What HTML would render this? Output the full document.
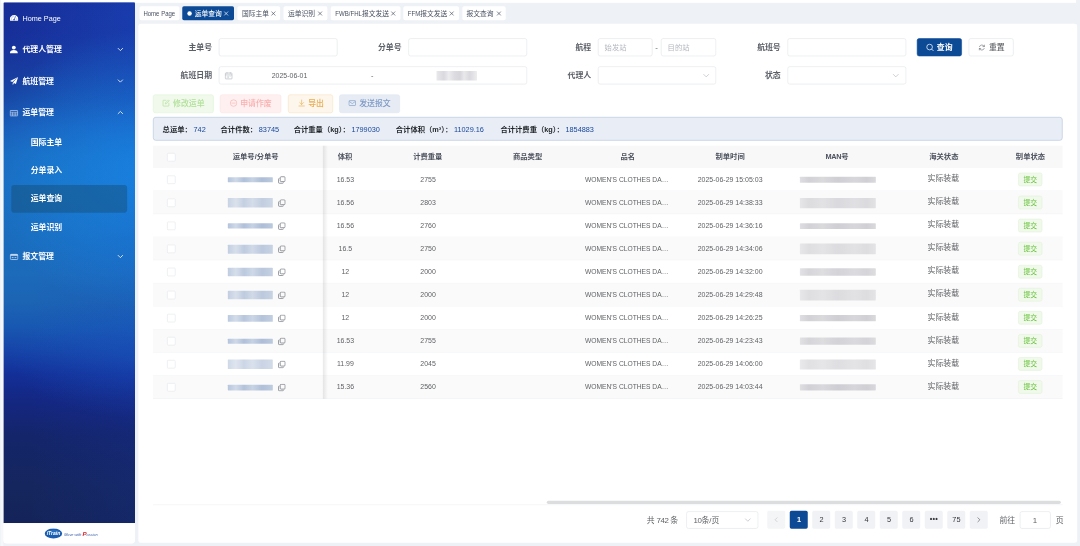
<!DOCTYPE html>
<html lang="zh-CN">
<head>
<meta charset="utf-8">
<title>运单查询</title>
<style>
*{box-sizing:border-box;margin:0;padding:0}
html,body{width:1080px;height:546px;overflow:hidden;background:#eef1f5}
body{font-family:"Liberation Sans","Noto Sans CJK SC",sans-serif;color:#606266}
#app{position:absolute;left:0;top:0;width:1920px;height:971px;transform:scale(.5625);transform-origin:0 0;background:#eef1f5;overflow:hidden}
.topstrip{position:absolute;left:2px;top:0;width:1911px;height:5px;background:#fff}
.leftstrip{position:absolute;left:1px;top:0;width:5px;height:971px;background:#f6f7fb}
/* sidebar */
.side{position:absolute;left:6px;top:4px;width:234px;height:961.5px;background:#fff;border-radius:2px 2px 6px 6px;overflow:hidden}
.side .bg{position:absolute;left:0;top:0;width:234px;height:925.5px;
background:
linear-gradient(90deg,rgba(24,60,200,0) 20%,rgba(24,60,200,.12) 100%),
radial-gradient(ellipse 110% 22% at 105% 2%,rgba(30,100,215,.3),rgba(30,100,215,0) 100%),
radial-gradient(ellipse 100% 12% at 105% 68%,rgba(30,110,200,.3),rgba(30,110,200,0) 100%),
radial-gradient(ellipse 125% 27% at 108% 32%,rgba(24,150,240,.72),rgba(24,150,240,.36) 50%,rgba(24,150,240,0) 100%),
linear-gradient(180deg,#172b96 0%,#172e98 6%,#18399e 12.2%,#1847a6 18.3%,#1a5ab6 24.1%,#1a68bd 29.5%,#1a6cc0 34.5%,#1a6bbc 46%,#1c6aba 52.2%,#1c64b4 57.6%,#1858b2 62.2%,#1644a8 66.8%,#132f98 71.4%,#142782 76.4%,#14256a 83.3%,#15265e 92.9%,#14245a 100%)}
.mi{position:absolute;left:0;width:234px;height:56px;color:#fff;font-weight:700;font-size:14px;line-height:56px}
.mi svg.ic{position:absolute;left:11px;top:20.5px;width:16px;height:16px}
.mi .tx{position:absolute;left:34px;top:0;white-space:nowrap}
.mi svg.ar{position:absolute;left:202px;top:22px;width:12px;height:12px}
.smi{position:absolute;left:0;width:234px;height:50px;line-height:50px;color:#fff;font-weight:700;font-size:14px}
.smi .tx{position:absolute;left:48.5px;top:0;white-space:nowrap}
.smi.act::before{content:"";position:absolute;left:14px;top:.5px;width:206px;height:49px;border-radius:5px;background:rgba(20,70,102,.4)}
.foot{position:absolute;left:0;top:925.5px;width:234px;height:36px;background:#fff}
/* tabs */
.tabs{position:absolute;left:246px;top:4px;width:1667px;height:36px}
.tab{position:absolute;top:7px;height:25px;line-height:26px;background:#fff;border-radius:3px;font-size:12px;color:#495060;white-space:nowrap;text-align:left;padding-left:8px}
.tab.act{background:#0d4a96;color:#fff;font-weight:500}
.tab.act::before{content:"";position:absolute;left:9px;top:8.5px;width:8px;height:8px;border-radius:50%;background:#fff}
.tab svg{position:absolute;top:8px;width:10px;height:10px}
.sx{display:inline-block;transform-origin:0 50%;transform:scaleX(.9)}
/* main */
.main{position:absolute;left:246px;top:42px;width:1669px;height:923px;background:#fff;border-radius:4px}
.lb{position:absolute;height:32px;margin-left:1px;line-height:30px;font-size:14px;font-weight:700;color:#5c6068;text-align:right;width:120px;white-space:nowrap}
.in{position:absolute;height:32px;border:1px solid #dfe2e8;border-radius:4px;background:#fff;font-size:14px;line-height:30px;color:#606266}
.in .ph{position:absolute;left:10.5px;top:0;color:#b4b8c0;font-size:13px}
.in svg.dn{position:absolute;right:10.5px;top:9px;width:13px;height:13px}
.btn{position:absolute;height:33px;border-radius:4px;border:1px solid;font-weight:500;font-size:14px;line-height:31px;white-space:nowrap}
.btn svg{position:absolute;left:15.5px;top:7.5px;width:14.5px;height:14.5px}
.btn .t{position:absolute;left:35px;top:0}
.sum{position:absolute;left:26px;top:166px;width:1617px;height:42px;border:1px solid #aebfda;border-radius:5px;background:#e9eef6;font-size:13px;line-height:43px;color:#1f2329;font-weight:700;white-space:nowrap}
.sum span.k{position:absolute;top:0}
.sum b{font-weight:400;color:#17459b;margin-left:3px}
/* table */
.tbl{position:absolute;left:26px;top:217px;width:1617px;height:640px}
.th{position:absolute;left:0;top:0;width:1617px;height:40px;background:#f8f8f9;font-size:13px;font-weight:700;color:#4d525e;line-height:37px}
.tr{position:absolute;left:0;width:1617px;height:41px;font-size:14px;line-height:39px;color:#606266;border-bottom:1px solid #eef0f4;background:#fff}
.tr.odd{background:#fafafa}
.c{position:absolute;top:0;transform:translateX(-50%);white-space:nowrap}
.c2{left:182.5px}.c3{left:341.5px}.c4{left:488.5px}.c5{left:666px}.c6{left:840px}.c7{left:1026px}.c8{left:1215px}.c9{left:1404px}.c10{left:1560px}
.tr .c9{top:-1.5px;left:1405px}
.th .c9{left:1406px}
.n{transform:translateX(-50%) scaleX(.886)}
.c6.n{transform:translateX(-50%) scaleX(.85);left:842px}
.ck{position:absolute;left:24.5px;top:12.5px;width:15px;height:15px;border:1px solid #e2e4e9;border-radius:2px;background:#fff}
.th .ck{top:12.5px}
.blur{position:absolute;border-radius:1px}
.wb{left:133px;top:16.5px;width:80px;height:9px;background:linear-gradient(90deg,#b4c4dc,#cfd9e8 18%,#b0c0d9 36%,#c6d2e4 55%,#adbdd7 76%,#bccade);filter:blur(.6px)}
.cp{position:absolute;left:221.5px;top:13.5px;width:14px;height:14px}
.man{left:1150px;top:15px;width:135px;height:11px;background:linear-gradient(90deg,#dcdce0,#cdcdd2 12%,#d6d6da 30%,#c9c9cf 50%,#d3d3d8 72%,#cbcbd0 88%,#d6d6da);filter:blur(1.3px)}
.tag{position:absolute;left:1538px;top:7.5px;width:43px;height:24px;border:1px solid #e1f3d8;background:#f0f9eb;border-radius:4px;color:#67c23a;font-size:12px;line-height:22px;text-align:center}
.shadow{position:absolute;left:302px;top:0;width:9px;height:450px;background:linear-gradient(90deg,rgba(0,0,0,.09),rgba(0,0,0,0))}
.scroll{position:absolute;left:700px;top:631px;width:914px;height:6px;border-radius:3px;background:#dcdddf}
.tbot{position:absolute;left:0;top:638px;width:1617px;height:1px;background:#eceef2}
/* pagination */
.pg{position:absolute;top:866px;height:32px;line-height:32px;font-size:14px;color:#606266;white-space:nowrap}
.pb{position:absolute;top:866px;width:32px;height:32px;border-radius:3px;background:#f1f2f5;color:#33363c;font-size:13px;font-weight:500;text-align:center;line-height:32px}
.pb.act{background:#0d4a96;color:#fff;font-weight:700}
.pb svg{position:absolute;left:10px;top:10px;width:12px;height:12px}
</style>
</head>
<body>
<div id="app">
<div class="leftstrip"></div>
<div class="topstrip"></div>
<div class="side">
<div class="bg"></div>
<div class="mi" style="top:.5px">
<svg class="ic" style="margin-top:-1px" viewBox="0 0 16 16"><path d="M8 2.500A7.500 7.500 0 0 0 .5 10c0 1.100.2 2.100.6 3h13.800c.4-.9.600-1.900.600-3A7.500 7.500 0 0 0 8 2.500z" fill="#fff"/><path d="M8.300 10.600 10.400 5.600" stroke="#2a43a8" stroke-width="1.200" stroke-linecap="round"/><circle cx="8" cy="11" r="1.400" fill="#2a43a8"/><circle cx="3" cy="9.800" r=".8" fill="#2a43a8"/><circle cx="4.400" cy="6.200" r=".8" fill="#2a43a8"/><circle cx="7.600" cy="4.600" r=".7" fill="#2a43a8"/><circle cx="13" cy="9.800" r=".8" fill="#2a43a8"/></svg>
<span class="tx" style="font-weight:400"><span class="sx" style="transform:scaleX(.92)">Home Page</span></span></div>
<div class="mi" style="top:55.5px">
<svg class="ic" viewBox="0 0 16 16"><circle cx="7.600" cy="4.600" r="3.400" fill="#fff"/><path d="M.6 14.600c0-3.400 2.800-5.500 7-5.500s7 2.100 7 5.500z" fill="#fff"/></svg>
<span class="tx">代理人管理</span>
<svg class="ar" viewBox="0 0 12 12"><path d="M2 4l4 4 4-4" fill="none" stroke="#e3ebf8" stroke-width="1.600" stroke-linecap="round" stroke-linejoin="round"/></svg></div>
<div class="mi" style="top:111.5px">
<svg class="ic" viewBox="0 0 16 16"><path d="M15.200 1 .8 8.200l4 1.700zM15.200 1 5.800 10.500l5.500 2.800zM5.600 11.200v3.800l2.300-2.500z" fill="#fff"/></svg>
<span class="tx">航班管理</span>
<svg class="ar" viewBox="0 0 12 12"><path d="M2 4l4 4 4-4" fill="none" stroke="#e3ebf8" stroke-width="1.600" stroke-linecap="round" stroke-linejoin="round"/></svg></div>
<div class="mi" style="top:168px">
<svg class="ic" viewBox="0 0 16 16"><rect x="1" y="3.400" width="13.400" height="9.600" rx=".7" fill="none" stroke="#dfe8f8" stroke-width="1.100"/><path d="M1 6.600h13.400M1 9.800h13.400M5.400 6.600v6.400M10 6.600v6.400" stroke="#dfe8f8" stroke-width=".9"/></svg>
<span class="tx">运单管理</span>
<svg class="ar" viewBox="0 0 12 12"><path d="M2 8l4-4 4 4" fill="none" stroke="#e3ebf8" stroke-width="1.600" stroke-linecap="round" stroke-linejoin="round"/></svg></div>
<div class="smi" style="top:223.5px"><span class="tx">国际主单</span></div>
<div class="smi" style="top:273.5px"><span class="tx">分单录入</span></div>
<div class="smi act" style="top:324px"><span class="tx">运单查询</span></div>
<div class="smi" style="top:374px"><span class="tx">运单识别</span></div>
<div class="mi" style="top:423.5px">
<svg class="ic" viewBox="0 0 16 16"><rect x="1.300" y="4.200" width="13.400" height="9.200" rx="1.800" fill="none" stroke="#d4e3f8" stroke-width="1.300"/><path d="M1.300 6.600V5.800a1.800 1.800 0 0 1 1.800-1.800h9.800a1.800 1.800 0 0 1 1.800 1.800v.8z" fill="#d4e3f8"/><path d="M4.600 9.900h1.800M9.600 9.900h1.800" stroke="#d4e3f8" stroke-width="1.300" stroke-linecap="round"/></svg>
<span class="tx">报文管理</span>
<svg class="ar" viewBox="0 0 12 12"><path d="M2 4l4 4 4-4" fill="none" stroke="#e3ebf8" stroke-width="1.600" stroke-linecap="round" stroke-linejoin="round"/></svg></div>
<div class="foot">
<svg style="position:absolute;left:72.500px;top:9px;width:32px;height:19px" viewBox="0 0 34 20"><ellipse cx="17" cy="10" rx="16.500" ry="9.500" fill="#1a5cb0"/><ellipse cx="17" cy="8" rx="13" ry="5" fill="#2d78c8" opacity=".6"/><text x="17" y="13.500" text-anchor="middle" font-family="Liberation Sans,sans-serif" font-size="9.500" font-weight="700" font-style="italic" fill="#fff">iTrain</text></svg>
<span style="position:absolute;left:108px;top:12.500px;font-size:6.800px;line-height:14px;color:#3b5ea8;font-style:italic;white-space:nowrap">Move with <b style="color:#d8232a;font-size:11px;font-style:italic">P</b>assion</span>
</div>
</div>
<div class="tabs">
<div class="tab" style="left:2px;width:71px;padding-left:7px"><span class="sx" style="position:relative;top:1px;transform:scaleX(.89)">Home Page</span></div>
<div class="tab act" style="left:78px;width:91.500px;padding-left:22px">运单查询<svg style="left:73px" viewBox="0 0 10 10"><path d="M1.500 1.500l7 7M8.500 1.500l-7 7" stroke="#fff" stroke-width="1.200"/></svg></div>
<div class="tab" style="left:176px;width:76px">国际主单<svg style="left:59px" viewBox="0 0 10 10"><path d="M1.500 1.500l7 7M8.500 1.500l-7 7" stroke="#495060" stroke-width="1.200"/></svg></div>
<div class="tab" style="left:258px;width:78px">运单识别<svg style="left:60px" viewBox="0 0 10 10"><path d="M1.500 1.500l7 7M8.500 1.500l-7 7" stroke="#495060" stroke-width="1.200"/></svg></div>
<div class="tab" style="left:342px;width:124px"><span class="sx" style="letter-spacing:0;margin-right:-5px">FWB/FHL</span>报文发送<svg style="left:106px" viewBox="0 0 10 10"><path d="M1.500 1.500l7 7M8.500 1.500l-7 7" stroke="#495060" stroke-width="1.200"/></svg></div>
<div class="tab" style="left:471px;width:99px"><span class="sx" style="margin-right:-2.5px">FFM</span>报文发送<svg style="left:81px" viewBox="0 0 10 10"><path d="M1.500 1.500l7 7M8.500 1.500l-7 7" stroke="#495060" stroke-width="1.200"/></svg></div>
<div class="tab" style="left:575.500px;width:77.500px">报文查询<svg style="left:60px" viewBox="0 0 10 10"><path d="M1.500 1.500l7 7M8.500 1.500l-7 7" stroke="#495060" stroke-width="1.200"/></svg></div>
</div>
<div class="main">
<!-- form row 1 -->
<div class="lb" style="left:10px;top:26px">主单号</div>
<div class="in" style="left:142.500px;top:26px;width:211.500px"></div>
<div class="lb" style="left:347px;top:26px">分单号</div>
<div class="in" style="left:479.500px;top:26px;width:211px"></div>
<div class="lb" style="left:684px;top:26px">航程</div>
<div class="in" style="left:817.300px;top:26px;width:97px"><span class="ph">始发站</span></div>
<div style="position:absolute;left:919px;top:26px;width:10px;line-height:32px;font-size:14px;color:#606266">-</div>
<div class="in" style="left:929.300px;top:26px;width:98px"><span class="ph">目的站</span></div>
<div class="lb" style="left:1021px;top:26px">航班号</div>
<div class="in" style="left:1153.500px;top:26px;width:211px"></div>
<div class="btn" style="left:1384px;top:26px;width:80px;height:32px;background:#0d4a96;border-color:#0d4a96;color:#fff;font-weight:700;font-size:14px;line-height:30px">
<svg style="left:15px;top:8px;width:15px;height:15px" viewBox="0 0 14 14"><circle cx="6.200" cy="6.200" r="4.700" fill="none" stroke="#fff" stroke-width="1.200"/><path d="M9.700 9.700l2.600 2.600" stroke="#fff" stroke-width="1.200" stroke-linecap="round"/></svg><span class="t" style="left:34.500px">查询</span></div>
<div class="btn" style="left:1475.500px;top:26px;width:80.500px;height:32px;background:#fff;border-color:#dfe2e8;color:#606266;font-weight:500;font-size:14px;line-height:30px">
<svg style="left:16px;top:9px;width:13px;height:13px" viewBox="0 0 14 14"><path d="M11.600 5A5 5 0 0 0 2.400 5.300M2.400 9A5 5 0 0 0 11.600 8.700" fill="none" stroke="#70747c" stroke-width="1.200" stroke-linecap="round"/><path d="M11.900 2.400v2.800H9.100M2.100 11.600V8.800h2.800" fill="none" stroke="#70747c" stroke-width="1.200" stroke-linecap="round" stroke-linejoin="round"/></svg><span class="t" style="left:35.500px">重置</span></div>
<!-- form row 2 -->
<div class="lb" style="left:10px;top:76px">航班日期</div>
<div class="in" style="left:142.500px;top:76px;width:548px">
<svg style="position:absolute;left:9.500px;top:7.500px;width:15px;height:15px" viewBox="0 0 14 14"><rect x="1.400" y="2.600" width="11.200" height="9.800" rx="1" fill="none" stroke="#adb1b9" stroke-width="1"/><path d="M1.400 5.800h11.200M4.300 1.400v2.400M9.700 1.400v2.400M4 8.200h1.200M6.400 8.200h1.200M8.800 8.200h1.200M4 10.200h1.200M6.400 10.200h1.200" stroke="#adb1b9" stroke-width="1"/></svg>
<span style="position:absolute;left:93px;top:0;font-size:14px;color:#606266"><span class="sx" style="transform:scaleX(.885)">2025-06-01</span></span>
<span style="position:absolute;left:270px;top:0;font-size:13px;color:#606266">-</span>
<span class="blur" style="left:386px;top:7px;width:72px;height:17px;background:linear-gradient(90deg,#e9e9ec,#d9d9de 18%,#ececef 30%,#dcdce0 45%,#d6d6db 58%,#e9e9ec 68%,#dadade 82%,#ededf0);filter:blur(.8px)"></span>
</div>
<div class="lb" style="left:684px;top:76px">代理人</div>
<div class="in" style="left:817.300px;top:76px;width:210px"><svg class="dn" viewBox="0 0 12 12"><path d="M2 4l4 4 4-4" fill="none" stroke="#b4b8c0" stroke-width="1.100" stroke-linecap="round" stroke-linejoin="round"/></svg></div>
<div class="lb" style="left:1021px;top:76px">状态</div>
<div class="in" style="left:1153.500px;top:76px;width:211px"><svg class="dn" viewBox="0 0 12 12"><path d="M2 4l4 4 4-4" fill="none" stroke="#b4b8c0" stroke-width="1.100" stroke-linecap="round" stroke-linejoin="round"/></svg></div>
<!-- action buttons -->
<div class="btn" style="left:25.600px;top:125.500px;width:108px;background:#f0f9eb;border-color:#e1f3d8;color:#b0e098">
<svg viewBox="0 0 14 14"><path d="M11.800 7.400v4a.8.800 0 0 1-.8.800H2.600a.8.800 0 0 1-.8-.8V3a.8.800 0 0 1 .8-.8h4" fill="none" stroke="#b0e098" stroke-width="1.100" stroke-linecap="round"/><path d="M5.600 8.600l.4-2 5-5 1.500 1.500-5 5z" fill="none" stroke="#b0e098" stroke-width="1.100" stroke-linejoin="round"/></svg><span class="t">修改运单</span></div>
<div class="btn" style="left:145px;top:125.500px;width:108.500px;background:#fef0f0;border-color:#fde2e2;color:#f9b0b0">
<svg viewBox="0 0 14 14"><circle cx="7" cy="7" r="5.600" fill="none" stroke="#f9b0b0" stroke-width="1.100"/><path d="M4.200 7h5.600" stroke="#f9b0b0" stroke-width="1.100" stroke-linecap="round"/></svg><span class="t">申请作废</span></div>
<div class="btn" style="left:266px;top:125.500px;width:80px;background:#fdf6ec;border-color:#f7e0bd;color:#e8ad52">
<svg viewBox="0 0 14 14"><path d="M7 1.800v7.400M3.800 6.200 7 9.400l3.200-3.200M2.400 12h9.200" fill="none" stroke="#e8ad52" stroke-width="1.100" stroke-linecap="round" stroke-linejoin="round"/></svg><span class="t">导出</span></div>
<div class="btn" style="left:356.500px;top:125.500px;width:108.500px;background:#e7ecf4;border-color:#dfe6f1;color:#7f9ac6">
<svg viewBox="0 0 14 14"><rect x="1.400" y="2.800" width="11.200" height="8.400" rx="1" fill="none" stroke="#7f9ac6" stroke-width="1.100"/><path d="M1.800 4.200 7 8l5.200-3.800" fill="none" stroke="#7f9ac6" stroke-width="1.100" stroke-linejoin="round"/></svg><span class="t">发送报文</span></div>
<!-- summary -->
<div class="sum">
<span class="k" style="left:16px">总运单：<b>742</b></span>
<span class="k" style="left:119px">合计件数：<b>83745</b></span>
<span class="k" style="left:249px">合计重量（kg）：<b>1799030</b></span>
<span class="k" style="left:430.600px">合计体积（m³）：<b>11029.16</b></span>
<span class="k" style="left:616.600px">合计计费重（kg）：<b>1854883</b></span>
</div>
<!-- table -->
<div class="tbl">
<div class="th">
<span class="ck"></span>
<span class="c c2">运单号/分单号</span><span class="c c3">体积</span><span class="c c4">计费重量</span><span class="c c5">商品类型</span><span class="c" style="left:844px">品名</span><span class="c c7" style="font-size:13px">制单时间</span><span class="c c8" style="left:1216px"><span style="letter-spacing:-.6px">MAN</span>号</span><span class="c c9">海关状态</span><span class="c c10">制单状态</span>
</div>
<div class="tr" style="top:40.00px">
<span class="ck c1"></span>
<span class="blur wb" style="top:16.0px;height:9px;opacity:1"></span><svg class="cp" viewBox="0 0 14 14"><rect x="4.2" y="1.2" width="8.6" height="8.6" rx="1.6" fill="none" stroke="#73777f" stroke-width="1.3"/><path d="M2.8 4.2 H2.6 A1.4 1.4 0 0 0 1.2 5.6 V11.4 A1.4 1.4 0 0 0 2.6 12.8 H8.4 A1.4 1.4 0 0 0 9.8 11.4 V11.2" fill="none" stroke="#73777f" stroke-width="1.3"/></svg>
<span class="c n c3">16.53</span><span class="c n c4">2755</span>
<span class="c n c6">WOMEN'S CLOTHES DA…</span>
<span class="c n c7">2025-06-29 15:05:03</span>
<span class="blur man" style="top:15.0px;height:11px;opacity:0.9"></span>
<span class="c c9">实际装载</span>
<span class="tag">提交</span>
</div>
<div class="tr odd" style="top:81.00px">
<span class="ck c1"></span>
<span class="blur wb" style="top:12.0px;height:17px;opacity:0.72"></span><svg class="cp" viewBox="0 0 14 14"><rect x="4.2" y="1.2" width="8.6" height="8.6" rx="1.6" fill="none" stroke="#73777f" stroke-width="1.3"/><path d="M2.8 4.2 H2.6 A1.4 1.4 0 0 0 1.2 5.6 V11.4 A1.4 1.4 0 0 0 2.6 12.8 H8.4 A1.4 1.4 0 0 0 9.8 11.4 V11.2" fill="none" stroke="#73777f" stroke-width="1.3"/></svg>
<span class="c n c3">16.56</span><span class="c n c4">2803</span>
<span class="c n c6">WOMEN'S CLOTHES DA…</span>
<span class="c n c7">2025-06-29 14:38:33</span>
<span class="blur man" style="top:11.5px;height:18px;opacity:0.65"></span>
<span class="c c9">实际装载</span>
<span class="tag">提交</span>
</div>
<div class="tr" style="top:122.00px">
<span class="ck c1"></span>
<span class="blur wb" style="top:16.0px;height:9px;opacity:1"></span><svg class="cp" viewBox="0 0 14 14"><rect x="4.2" y="1.2" width="8.6" height="8.6" rx="1.6" fill="none" stroke="#73777f" stroke-width="1.3"/><path d="M2.8 4.2 H2.6 A1.4 1.4 0 0 0 1.2 5.6 V11.4 A1.4 1.4 0 0 0 2.6 12.8 H8.4 A1.4 1.4 0 0 0 9.8 11.4 V11.2" fill="none" stroke="#73777f" stroke-width="1.3"/></svg>
<span class="c n c3">16.56</span><span class="c n c4">2760</span>
<span class="c n c6">WOMEN'S CLOTHES DA…</span>
<span class="c n c7">2025-06-29 14:36:16</span>
<span class="blur man" style="top:15.5px;height:10px;opacity:0.9"></span>
<span class="c c9">实际装载</span>
<span class="tag">提交</span>
</div>
<div class="tr odd" style="top:163.00px">
<span class="ck c1"></span>
<span class="blur wb" style="top:12.5px;height:16px;opacity:0.8"></span><svg class="cp" viewBox="0 0 14 14"><rect x="4.2" y="1.2" width="8.6" height="8.6" rx="1.6" fill="none" stroke="#73777f" stroke-width="1.3"/><path d="M2.8 4.2 H2.6 A1.4 1.4 0 0 0 1.2 5.6 V11.4 A1.4 1.4 0 0 0 2.6 12.8 H8.4 A1.4 1.4 0 0 0 9.8 11.4 V11.2" fill="none" stroke="#73777f" stroke-width="1.3"/></svg>
<span class="c n c3">16.5</span><span class="c n c4">2750</span>
<span class="c n c6">WOMEN'S CLOTHES DA…</span>
<span class="c n c7">2025-06-29 14:34:06</span>
<span class="blur man" style="top:11.0px;height:19px;opacity:0.6"></span>
<span class="c c9">实际装载</span>
<span class="tag">提交</span>
</div>
<div class="tr" style="top:204.00px">
<span class="ck c1"></span>
<span class="blur wb" style="top:13.0px;height:15px;opacity:0.85"></span><svg class="cp" viewBox="0 0 14 14"><rect x="4.2" y="1.2" width="8.6" height="8.6" rx="1.6" fill="none" stroke="#73777f" stroke-width="1.3"/><path d="M2.8 4.2 H2.6 A1.4 1.4 0 0 0 1.2 5.6 V11.4 A1.4 1.4 0 0 0 2.6 12.8 H8.4 A1.4 1.4 0 0 0 9.8 11.4 V11.2" fill="none" stroke="#73777f" stroke-width="1.3"/></svg>
<span class="c n c3">12</span><span class="c n c4">2000</span>
<span class="c n c6">WOMEN'S CLOTHES DA…</span>
<span class="c n c7">2025-06-29 14:32:00</span>
<span class="blur man" style="top:14.0px;height:13px;opacity:0.8"></span>
<span class="c c9">实际装载</span>
<span class="tag">提交</span>
</div>
<div class="tr odd" style="top:245.00px">
<span class="ck c1"></span>
<span class="blur wb" style="top:13.0px;height:15px;opacity:0.8"></span><svg class="cp" viewBox="0 0 14 14"><rect x="4.2" y="1.2" width="8.6" height="8.6" rx="1.6" fill="none" stroke="#73777f" stroke-width="1.3"/><path d="M2.8 4.2 H2.6 A1.4 1.4 0 0 0 1.2 5.6 V11.4 A1.4 1.4 0 0 0 2.6 12.8 H8.4 A1.4 1.4 0 0 0 9.8 11.4 V11.2" fill="none" stroke="#73777f" stroke-width="1.3"/></svg>
<span class="c n c3">12</span><span class="c n c4">2000</span>
<span class="c n c6">WOMEN'S CLOTHES DA…</span>
<span class="c n c7">2025-06-29 14:29:48</span>
<span class="blur man" style="top:11.0px;height:19px;opacity:0.6"></span>
<span class="c c9">实际装载</span>
<span class="tag">提交</span>
</div>
<div class="tr" style="top:286.00px">
<span class="ck c1"></span>
<span class="blur wb" style="top:14.5px;height:12px;opacity:0.9"></span><svg class="cp" viewBox="0 0 14 14"><rect x="4.2" y="1.2" width="8.6" height="8.6" rx="1.6" fill="none" stroke="#73777f" stroke-width="1.3"/><path d="M2.8 4.2 H2.6 A1.4 1.4 0 0 0 1.2 5.6 V11.4 A1.4 1.4 0 0 0 2.6 12.8 H8.4 A1.4 1.4 0 0 0 9.8 11.4 V11.2" fill="none" stroke="#73777f" stroke-width="1.3"/></svg>
<span class="c n c3">12</span><span class="c n c4">2000</span>
<span class="c n c6">WOMEN'S CLOTHES DA…</span>
<span class="c n c7">2025-06-29 14:26:25</span>
<span class="blur man" style="top:15.0px;height:11px;opacity:0.9"></span>
<span class="c c9">实际装载</span>
<span class="tag">提交</span>
</div>
<div class="tr odd" style="top:327.00px">
<span class="ck c1"></span>
<span class="blur wb" style="top:16.0px;height:9px;opacity:1"></span><svg class="cp" viewBox="0 0 14 14"><rect x="4.2" y="1.2" width="8.6" height="8.6" rx="1.6" fill="none" stroke="#73777f" stroke-width="1.3"/><path d="M2.8 4.2 H2.6 A1.4 1.4 0 0 0 1.2 5.6 V11.4 A1.4 1.4 0 0 0 2.6 12.8 H8.4 A1.4 1.4 0 0 0 9.8 11.4 V11.2" fill="none" stroke="#73777f" stroke-width="1.3"/></svg>
<span class="c n c3">16.53</span><span class="c n c4">2755</span>
<span class="c n c6">WOMEN'S CLOTHES DA…</span>
<span class="c n c7">2025-06-29 14:23:43</span>
<span class="blur man" style="top:14.0px;height:13px;opacity:0.8"></span>
<span class="c c9">实际装载</span>
<span class="tag">提交</span>
</div>
<div class="tr" style="top:368.00px">
<span class="ck c1"></span>
<span class="blur wb" style="top:12.0px;height:17px;opacity:0.65"></span><svg class="cp" viewBox="0 0 14 14"><rect x="4.2" y="1.2" width="8.6" height="8.6" rx="1.6" fill="none" stroke="#73777f" stroke-width="1.3"/><path d="M2.8 4.2 H2.6 A1.4 1.4 0 0 0 1.2 5.6 V11.4 A1.4 1.4 0 0 0 2.6 12.8 H8.4 A1.4 1.4 0 0 0 9.8 11.4 V11.2" fill="none" stroke="#73777f" stroke-width="1.3"/></svg>
<span class="c n c3">11.99</span><span class="c n c4">2045</span>
<span class="c n c6">WOMEN'S CLOTHES DA…</span>
<span class="c n c7">2025-06-29 14:06:00</span>
<span class="blur man" style="top:11.5px;height:18px;opacity:0.6"></span>
<span class="c c9">实际装载</span>
<span class="tag">提交</span>
</div>
<div class="tr odd" style="top:409.00px">
<span class="ck c1"></span>
<span class="blur wb" style="top:15.5px;height:10px;opacity:0.95"></span><svg class="cp" viewBox="0 0 14 14"><rect x="4.2" y="1.2" width="8.6" height="8.6" rx="1.6" fill="none" stroke="#73777f" stroke-width="1.3"/><path d="M2.8 4.2 H2.6 A1.4 1.4 0 0 0 1.2 5.6 V11.4 A1.4 1.4 0 0 0 2.6 12.8 H8.4 A1.4 1.4 0 0 0 9.8 11.4 V11.2" fill="none" stroke="#73777f" stroke-width="1.3"/></svg>
<span class="c n c3">15.36</span><span class="c n c4">2560</span>
<span class="c n c6">WOMEN'S CLOTHES DA…</span>
<span class="c n c7">2025-06-29 14:03:44</span>
<span class="blur man" style="top:15.0px;height:11px;opacity:0.9"></span>
<span class="c c9">实际装载</span>
<span class="tag">提交</span>
</div><div class="shadow"></div>
<div class="tbot"></div>
<div class="scroll"></div>
</div>
<!-- pagination -->
<div class="pg" style="left:903.800px">共<span style="letter-spacing:-.7px"> 742 </span>条</div>
<div class="in" style="left:974px;top:866.500px;width:127.600px;height:31px;line-height:29px"><span style="position:absolute;left:12px;top:0;font-size:14px;color:#606266"><span style="letter-spacing:-.8px">10</span>条/页</span><svg class="dn" style="top:8px" viewBox="0 0 12 12"><path d="M2 4l4 4 4-4" fill="none" stroke="#b4b8c0" stroke-width="1.100" stroke-linecap="round" stroke-linejoin="round"/></svg></div>
<div class="pb" style="left:1118.300px;background:#f4f5f7"><svg viewBox="0 0 12 12"><path d="M7.500 2.500 4 6l3.500 3.500" fill="none" stroke="#c3c6cc" stroke-width="1.200" stroke-linecap="round" stroke-linejoin="round"/></svg></div>
<div class="pb act" style="left:1158.300px">1</div>
<div class="pb" style="left:1198.300px">2</div>
<div class="pb" style="left:1238.300px">3</div>
<div class="pb" style="left:1278.300px">4</div>
<div class="pb" style="left:1318.300px">5</div>
<div class="pb" style="left:1358.300px">6</div>
<div class="pb" style="left:1398.300px;font-weight:700;letter-spacing:.5px;line-height:28px">•••</div>
<div class="pb" style="left:1438.300px">75</div>
<div class="pb" style="left:1478.300px"><svg viewBox="0 0 12 12"><path d="M4.500 2.500 8 6 4.500 9.500" fill="none" stroke="#555a64" stroke-width="1.200" stroke-linecap="round" stroke-linejoin="round"/></svg></div>
<div class="pg" style="left:1530.700px">前往</div>
<div class="in" style="left:1566.600px;top:866.500px;width:55px;height:31px;line-height:29px;text-align:center;font-size:14px">1</div>
<div class="pg" style="left:1630.800px">页</div>
</div>
</div>
</body>
</html>
